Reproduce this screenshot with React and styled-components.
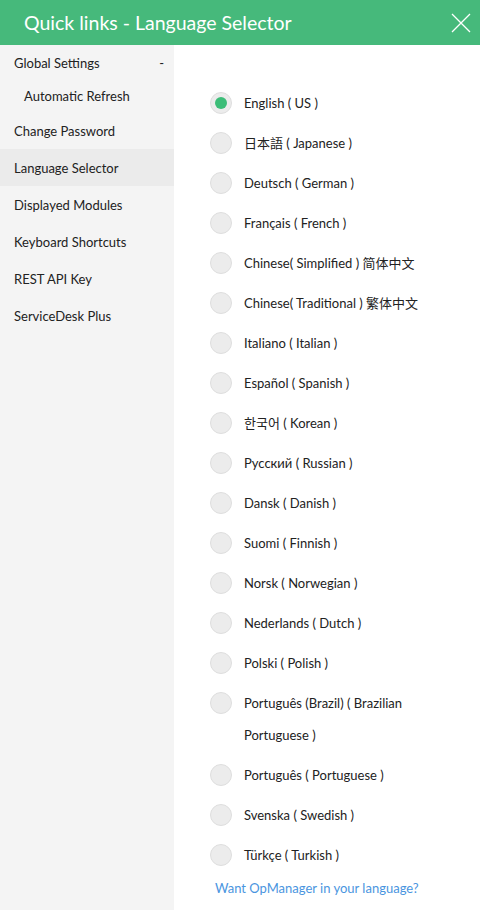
import React, { useState } from 'react';
import styled, { createGlobalStyle } from 'styled-components';

const GlobalStyle = createGlobalStyle`
  html, body {
    margin: 0;
    padding: 0;
    background: #ffffff;
    font-family: Lato, 'Noto Sans', 'Noto Sans CJK SC', sans-serif;
  }
`;

const Page = styled.div`
  width: 480px;
  height: 910px;
  display: flex;
  flex-direction: column;
  overflow: hidden;
`;

const Header = styled.div`
  height: 45px;
  flex-shrink: 0;
  background-color: #46b97b;
  display: flex;
  align-items: center;
  justify-content: space-between;
  padding: 0 8px 0 24px;
`;

const Title = styled.div`
  color: #ffffff;
  font-size: 19.5px;
`;

const CloseButton = styled.button`
  background: none;
  border: none;
  padding: 0;
  width: 22px;
  height: 22px;
  display: flex;
  align-items: center;
  justify-content: center;
  cursor: pointer;
`;

const Body = styled.div`
  flex: 1;
  display: flex;
`;

const Sidebar = styled.div`
  width: 174px;
  flex-shrink: 0;
  background-color: #f4f4f4;
`;

const NavItem = styled.div`
  display: flex;
  align-items: center;
  justify-content: space-between;
  box-sizing: border-box;
  height: ${(props) => props.height || 37}px;
  padding: 0 10px ${(props) => (props.sub ? 2 : 0)}px ${(props) => (props.sub ? 24 : 14)}px;
  font-size: 13px;
  color: #222222;
  background-color: ${(props) => (props.active ? '#ebebeb' : 'transparent')};
  cursor: pointer;
`;

const Content = styled.div`
  flex: 1;
  padding: 38px 20px 0 36px;
`;

const LangRow = styled.label`
  display: flex;
  align-items: flex-start;
  padding: 4px 0;
  cursor: pointer;
`;

const Radio = styled.span`
  width: 20px;
  height: 20px;
  margin-top: 5px;
  flex-shrink: 0;
  border-radius: 50%;
  border: 1px solid #dedede;
  background-color: #ececec;
  display: flex;
  align-items: center;
  justify-content: center;
`;

const Dot = styled.span`
  width: 12px;
  height: 12px;
  border-radius: 50%;
  background-color: #3cbd78;
`;

const LangText = styled.span`
  margin-left: 12px;
  font-size: 13px;
  line-height: 32px;
  color: #222222;
`;

const HelpLink = styled.a`
  display: block;
  margin-top: 3px;
  margin-left: 5px;
  font-size: 13px;
  line-height: 20px;
  color: #4a95e0;
  text-decoration: none;
`;

const navItems = [
  { label: 'Global Settings', toggle: '-', height: 36 },
  { label: 'Automatic Refresh', sub: true, height: 31 },
  { label: 'Change Password' },
  { label: 'Language Selector', active: true },
  { label: 'Displayed Modules' },
  { label: 'Keyboard Shortcuts' },
  { label: 'REST API Key' },
  { label: 'ServiceDesk Plus' },
];

const languages = [
  'English ( US )',
  '日本語 ( Japanese )',
  'Deutsch ( German )',
  'Français ( French )',
  'Chinese( Simplified ) 简体中文',
  'Chinese( Traditional ) 繁体中文',
  'Italiano ( Italian )',
  'Español ( Spanish )',
  '한국어 ( Korean )',
  'Русский ( Russian )',
  'Dansk ( Danish )',
  'Suomi ( Finnish )',
  'Norsk ( Norwegian )',
  'Nederlands ( Dutch )',
  'Polski ( Polish )',
  'Português (Brazil) ( Brazilian Portuguese )',
  'Português ( Portuguese )',
  'Svenska ( Swedish )',
  'Türkçe ( Turkish )',
];

const App = () => {
  const [selected, setSelected] = useState(0);

  return (
    <Page>
      <GlobalStyle />
      <Header>
        <Title>Quick links - Language Selector</Title>
        <CloseButton>
          <svg width="20" height="20" viewBox="0 0 20 20">
            <path d="M1 1 L19 19 M19 1 L1 19" stroke="#ffffff" strokeWidth="1.3" fill="none" />
          </svg>
        </CloseButton>
      </Header>
      <Body>
        <Sidebar>
          {navItems.map((item) => (
            <NavItem key={item.label} sub={item.sub} active={item.active} height={item.height}>
              <span>{item.label}</span>
              {item.toggle && <span>{item.toggle}</span>}
            </NavItem>
          ))}
        </Sidebar>
        <Content>
          {languages.map((lang, i) => (
            <LangRow key={lang} onClick={() => setSelected(i)}>
              <Radio>{selected === i && <Dot />}</Radio>
              <LangText>{lang}</LangText>
            </LangRow>
          ))}
          <HelpLink href="#">Want OpManager in your language?</HelpLink>
        </Content>
      </Body>
    </Page>
  );
};

export default App;
